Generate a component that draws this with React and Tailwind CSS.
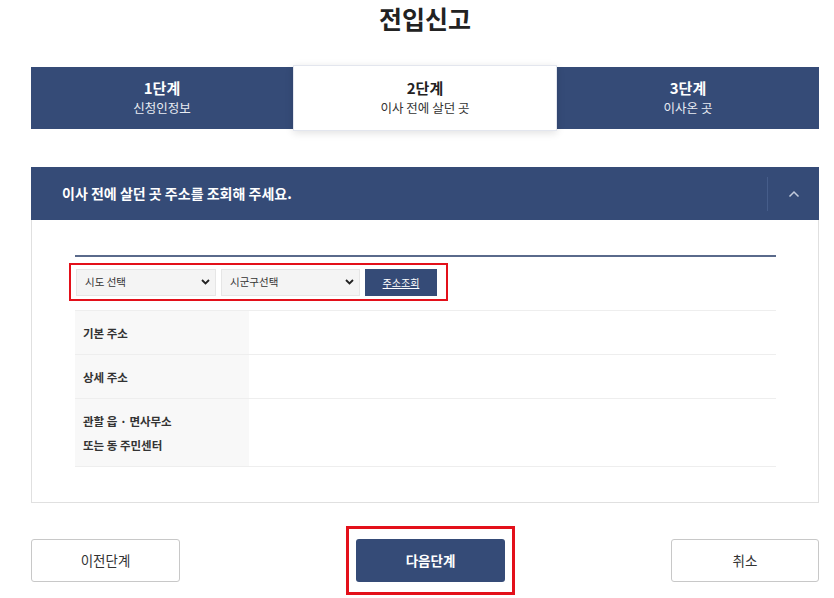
import React from "react";

const NAVY = "bg-[#354b77]";

function Chevron() {
  return (
    <svg width="9" height="6" viewBox="0 0 9 6" className="shrink-0">
      <path d="M1 1 L4.5 4.5 L8 1" fill="none" stroke="#222" strokeWidth="1.8" />
    </svg>
  );
}

function FakeSelect({ label, w }) {
  return (
    <div className={`${w} h-[27px] bg-[#f4f4f4] border border-[#e6e6e6] flex items-center justify-between pl-[8px] pr-[5px]`}>
      <span className="text-[10.5px] text-[#333]">{label}</span>
      <Chevron />
    </div>
  );
}

function Row({ h, children }) {
  return (
    <div className={`flex ${h} border-t border-[#eeeeee]`}>
      <div className="w-[174px] bg-[#f8f8f8] flex flex-col justify-center pl-[8px] text-[11.5px] font-semibold text-[#333] leading-[24px]">
        {children}
      </div>
      <div className="flex-1" />
    </div>
  );
}

export default function App() {
  return (
    <div className="w-[834px] h-[598px] bg-white overflow-hidden font-['Noto_Sans_CJK_KR','Noto_Sans',sans-serif]">
      <div className="ml-[31px] w-[788px]">
        <h1 className="text-center text-[25px] font-bold leading-[36px] text-[#222]">전입신고</h1>

        <div className={`mt-[31px] flex h-[62px] ${NAVY}`}>
          <div className="flex-1 flex flex-col items-center justify-center text-white">
            <div className="text-[15px] font-bold leading-[20px]">1단계</div>
            <div className="text-[12.5px] leading-[20px] text-[#e8ecf3]">신청인정보</div>
          </div>
          <div className="flex-1 -my-[2px] bg-white border border-[#e3e6ee] shadow-[0_2px_8px_rgba(0,0,0,0.12)] flex flex-col items-center justify-center text-[#222]">
            <div className="text-[15px] font-bold leading-[20px]">2단계</div>
            <div className="text-[12.5px] leading-[20px] text-[#333]">이사 전에 살던 곳</div>
          </div>
          <div className="flex-1 flex flex-col items-center justify-center text-white">
            <div className="text-[15px] font-bold leading-[20px]">3단계</div>
            <div className="text-[12.5px] leading-[20px] text-[#e8ecf3]">이사온 곳</div>
          </div>
        </div>

        <div className="mt-[38px] border border-[#e0e0e0]">
          <div className={`h-[53px] ${NAVY} flex items-center -m-px`}>
            <div className="flex-1 pl-[31px] text-[14px] font-bold text-white">이사 전에 살던 곳 주소를 조회해 주세요.</div>
            <div className="w-px h-[34px] bg-[#465d8a]" />
            <div className="w-[51px] flex items-center justify-center">
              <svg width="12" height="8" viewBox="0 0 12 8">
                <path d="M1.5 6.5 L6 2 L10.5 6.5" fill="none" stroke="#c3cbdc" strokeWidth="1.5" />
              </svg>
            </div>
          </div>
          <div className="pl-[43px] pr-[42px] pt-[36px] pb-[35px]">
            <div className="h-[2px] bg-[#5a6a8b]" />
            <div className="mt-[6px] -ml-[6px] w-[379px] h-[38px] border-2 border-[#e3101a] flex items-center gap-[5px] pl-[5px]">
              <FakeSelect label="시도 선택" w="w-[140px]" />
              <FakeSelect label="시군구선택" w="w-[139px]" />
              <div className={`w-[72px] h-[27px] ${NAVY} flex items-center justify-center text-[10px] text-white underline`}>주소조회</div>
            </div>
            <div className="mt-[9px] border-b border-[#eeeeee]">
              <Row h="h-[44px]">기본 주소</Row>
              <Row h="h-[44px]">상세 주소</Row>
              <Row h="h-[68px]">
                <div>관할 읍 · 면사무소</div>
                <div>또는 동 주민센터</div>
              </Row>
            </div>
          </div>
        </div>

        <div className="mt-[23px] flex items-start">
          <div className="mt-[13px] w-[149px] h-[43px] border border-[#c8c8c8] rounded-[3px] flex items-center justify-center text-[13.5px] text-[#333]">이전단계</div>
          <div className="ml-[166px] w-[169px] h-[69px] border-[3px] border-[#e3101a] pt-[10px] pl-[7px]">
            <div className={`w-[149px] h-[43px] ${NAVY} rounded-[3px] flex items-center justify-center text-[13.5px] font-semibold text-white`}>다음단계</div>
          </div>
          <div className="ml-auto mt-[13px] w-[148px] h-[43px] border border-[#c8c8c8] rounded-[3px] flex items-center justify-center text-[13.5px] text-[#333]">취소</div>
        </div>
      </div>
    </div>
  );
}
